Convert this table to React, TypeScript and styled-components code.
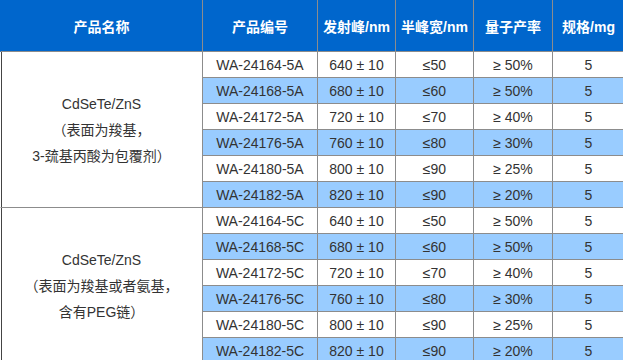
import React from 'react';
import styled, { createGlobalStyle } from 'styled-components';

const GlobalStyle = createGlobalStyle`
  html, body {
    margin: 0;
    padding: 0;
    background: #fff;
    overflow: hidden;
  }
  body {
    font-family: 'Liberation Sans', 'Noto Sans CJK SC', sans-serif;
  }
`;

const Table = styled.table`
  border-collapse: separate;
  border-spacing: 0;
  table-layout: fixed;
  width: 625px;
  font-size: 14px;
  color: #333;
`;

const HeadCell = styled.th<{ $w: number; $first?: boolean }>`
  box-sizing: border-box;
  width: ${(p) => p.$w}px;
  height: 52px;
  padding: 0;
  background: #0066cc;
  color: #fff;
  font-weight: bold;
  font-size: 14px;
  text-align: center;
  vertical-align: middle;
  border-right: 1px solid #8c8c8c;
  border-bottom: 1px solid #8c8c8c;
  border-left: ${(p) => (p.$first ? '1px solid #0066cc' : 'none')};
`;

const Row = styled.tr<{ $shade: boolean }>`
  background: ${(p) => (p.$shade ? '#99ccff' : '#fff')};
`;

const Cell = styled.td`
  box-sizing: border-box;
  height: 26px;
  padding: 0;
  text-align: center;
  vertical-align: middle;
  border-right: 1px solid #8c8c8c;
  border-bottom: 1px solid #8c8c8c;
  white-space: nowrap;
`;

const NameCell = styled(Cell)`
  background: #fff;
  border-left: 1px solid #fff;
  box-shadow: inset 1px 0 0 #444;
  line-height: 26px;
  white-space: normal;
`;

const NameLine = styled.div`
  display: block;
`;

type Item = { code: string; peak: string; fwhm: string; qy: string };

const groups: { lines: string[]; suffix: string; items: Item[] }[] = [
  {
    lines: ['CdSeTe/ZnS', '（表面为羧基，', '3-巯基丙酸为包覆剂）'],
    suffix: 'A',
    items: [],
  },
  {
    lines: ['CdSeTe/ZnS', '（表面为羧基或者氨基，', '含有PEG链）'],
    suffix: 'C',
    items: [],
  },
];

const base = [
  ['24164', '640', '≤50', '≥ 50%'],
  ['24168', '680', '≤60', '≥ 50%'],
  ['24172', '720', '≤70', '≥ 40%'],
  ['24176', '760', '≤80', '≥ 30%'],
  ['24180', '800', '≤90', '≥ 25%'],
  ['24182', '820', '≤90', '≥ 20%'],
];

groups.forEach((g) => {
  g.items = base.map(([n, peak, fwhm, qy]) => ({
    code: `WA-${n}-5${g.suffix}`,
    peak: `${peak} ± 10`,
    fwhm,
    qy,
  }));
});

const columns = [
  { label: '产品名称', w: 203 },
  { label: '产品编号', w: 115 },
  { label: '发射峰/nm', w: 78 },
  { label: '半峰宽/nm', w: 78 },
  { label: '量子产率', w: 79 },
  { label: '规格/mg', w: 72 },
];

const App = () => {
  return (
    <>
      <GlobalStyle />
      <Table>
        <thead>
          <tr>
            {columns.map((c, i) => (
              <HeadCell key={c.label} $w={c.w} $first={i === 0}>
                {c.label}
              </HeadCell>
            ))}
          </tr>
        </thead>
        <tbody>
          {groups.map((g) =>
            g.items.map((it, i) => (
              <Row key={it.code} $shade={i % 2 === 1}>
                {i === 0 && (
                  <NameCell rowSpan={g.items.length}>
                    {g.lines.map((l) => (
                      <NameLine key={l}>{l}</NameLine>
                    ))}
                  </NameCell>
                )}
                <Cell>{it.code}</Cell>
                <Cell>{it.peak}</Cell>
                <Cell>{it.fwhm}</Cell>
                <Cell>{it.qy}</Cell>
                <Cell>5</Cell>
              </Row>
            ))
          )}
        </tbody>
      </Table>
    </>
  );
};

export default App;
